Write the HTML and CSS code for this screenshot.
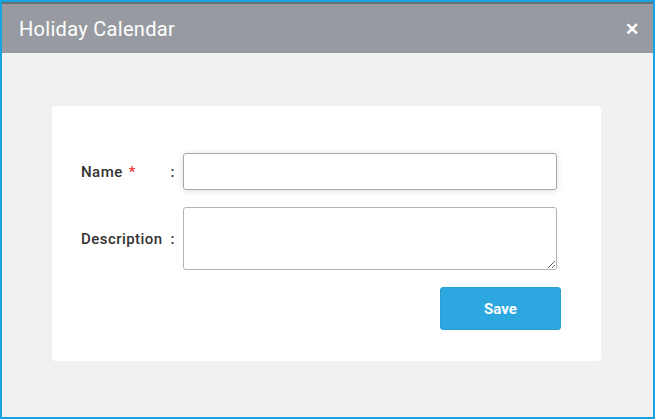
FILE: index.html
```html
<!DOCTYPE html>
<html>
<head>
<meta charset="utf-8">
<link rel="stylesheet" href="styles.css">
</head>
<body>
<div class="dialog">
  <div class="header">
    <span class="title">Holiday Calendar</span>
    <span class="close">&#x2715;</span>
  </div>
  <div class="body">
    <div class="card">
      <div class="row">
        <div class="label"><span>Name <span class="req">*</span></span><span class="colon">:</span></div>
        <input class="input focus" type="text">
      </div>
      <div class="row">
        <div class="label"><span>Description</span><span class="colon">:</span></div>
        <textarea class="textarea"></textarea>
      </div>
      <div class="actions">
        <button class="save">Save</button>
      </div>
    </div>
  </div>
</div>
</body>
</html>
```
FILE: styles.css
```css
html, body {
  margin: 0;
  padding: 0;
}
body {
  font-family: Roboto, "Liberation Sans", sans-serif;
}
.dialog {
  width: 655px;
  height: 419px;
  box-sizing: border-box;
  border: 2px solid #15a4e0;
  display: flex;
  flex-direction: column;
  background: #f1f1f1;
}
.header {
  height: 51px;
  box-sizing: border-box;
  background: #979ba1;
  border-top: 2px solid #6c6f74;
  display: flex;
  align-items: center;
  justify-content: space-between;
  padding: 0 14px 0 17px;
}
.title {
  color: #fff;
  font-size: 20px;
  letter-spacing: 0.3px;
}
.close {
  color: #fff;
  font-size: 17px;
  font-weight: 700;
}
.body {
  flex: 1;
  padding: 53px 52px 0 50px;
}
.card {
  background: #fff;
  border-radius: 4px;
  height: 255px;
  box-sizing: border-box;
  padding: 47px 40px 0 29px;
  display: flex;
  flex-direction: column;
  gap: 17px;
}
.row {
  display: flex;
  align-items: center;
}
.label {
  width: 102px;
  display: flex;
  justify-content: space-between;
  font-size: 15px;
  font-weight: 500;
  letter-spacing: 0.45px;
  color: #333;
}
.colon {
  padding-right: 8px;
}
.req {
  color: #e53935;
  margin-left: 2px;
}
.input, .textarea {
  width: 374px;
  box-sizing: border-box;
  border: 1px solid #b5b5b5;
  border-radius: 3px;
  background: #fff;
  margin: 0;
  font-family: inherit;
  font-size: 14px;
}
.input {
  height: 37px;
}
.focus {
  border-color: #a8a8a8;
  box-shadow: 0 1px 6px rgba(0,0,0,0.14);
}
.textarea {
  height: 63px;
  resize: both;
}
.actions {
  display: flex;
  justify-content: flex-end;
}
.save {
  width: 121px;
  height: 43px;
  background: #2ca7e0;
  border: 1px solid #2a9fd4;
  border-radius: 3px;
  color: #fff;
  font-family: Roboto, "Liberation Sans", sans-serif;
  font-size: 15px;
  font-weight: 700;
}
```
